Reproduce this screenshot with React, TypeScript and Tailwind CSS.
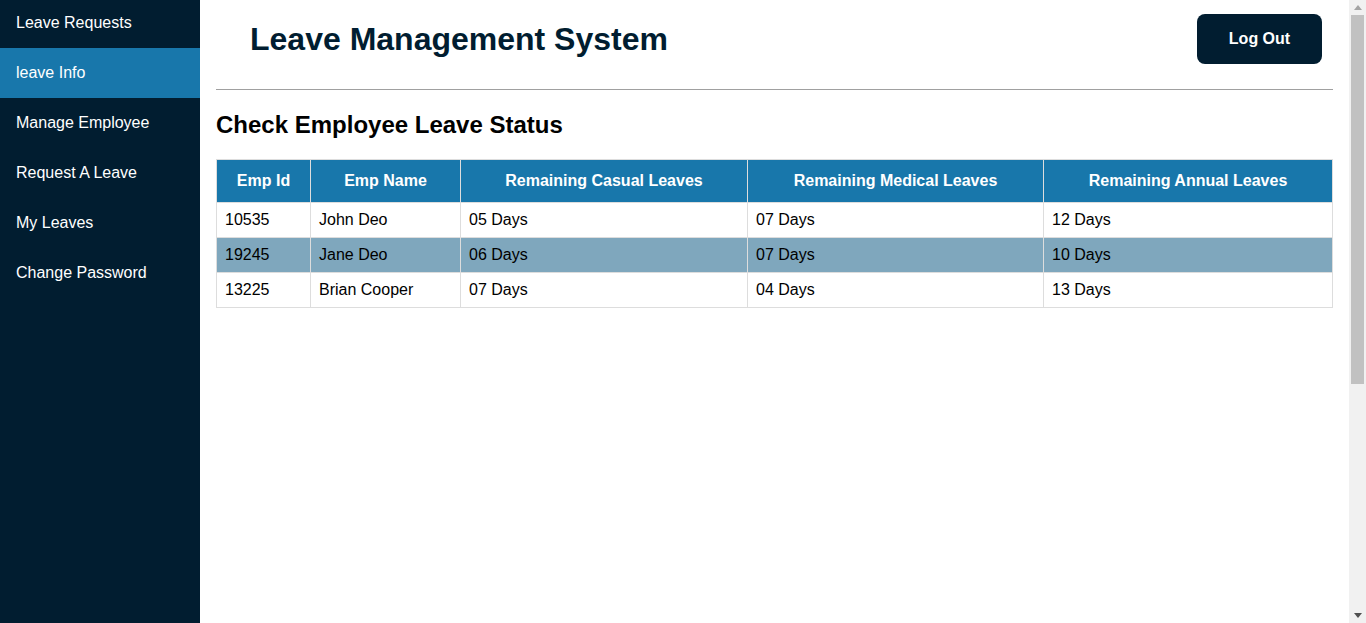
const navItems = [
  "Leave Requests",
  "leave Info",
  "Manage Employee",
  "Request A Leave",
  "My Leaves",
  "Change Password",
];

const rows = [
  { id: "10535", name: "John Deo", casual: "05 Days", medical: "07 Days", annual: "12 Days" },
  { id: "19245", name: "Jane Deo", casual: "06 Days", medical: "07 Days", annual: "10 Days" },
  { id: "13225", name: "Brian Cooper", casual: "07 Days", medical: "04 Days", annual: "13 Days" },
];

export default function App() {
  return (
    <div className="flex h-[623px] overflow-hidden bg-white" style={{ fontFamily: '"Liberation Sans", Arial, sans-serif' }}>
      {/* Sidebar */}
      <aside className="w-[200px] shrink-0 bg-[#011d30]">
        <div className="-mt-[2px] flex flex-col">
          {navItems.map((label) => (
            <a
              key={label}
              href="#"
              className={`flex h-[50px] items-center pl-4 text-base text-white ${
                label === "leave Info" ? "bg-[#1877ab]" : ""
              }`}
            >
              {label}
            </a>
          ))}
        </div>
      </aside>

      {/* Main */}
      <main className="min-w-0 flex-1 px-4">
        <header className="flex items-center justify-between pt-[14px]">
          <h1 className="ml-[34px] text-[32px] font-bold text-[#011d30]">Leave Management System</h1>
          <button className="mr-[11px] h-[50px] w-[125px] rounded-lg bg-[#011d30] text-base font-bold text-white">
            Log Out
          </button>
        </header>
        <hr className="mt-[25px] border-t border-[#a0a0a0]" />

        <h2 className="mt-[21px] text-2xl leading-7 font-bold text-black">Check Employee Leave Status</h2>

        <table className="mt-5 w-full border-collapse text-base text-black">
          <thead>
            <tr className="h-[43px] bg-[#1877ab] text-white">
              <th className="w-[94px] border border-[#ddd] px-2 font-bold">Emp Id</th>
              <th className="w-[150px] border border-[#ddd] px-2 font-bold">Emp Name</th>
              <th className="w-[287px] border border-[#ddd] px-2 font-bold">Remaining Casual Leaves</th>
              <th className="w-[296px] border border-[#ddd] px-2 font-bold">Remaining Medical Leaves</th>
              <th className="border border-[#ddd] px-2 font-bold">Remaining Annual Leaves</th>
            </tr>
          </thead>
          <tbody>
            {rows.map((r, i) => (
              <tr key={r.id} className={`h-[35px] ${i === 1 ? "bg-[#7fa7bd]" : "bg-white"}`}>
                <td className="border border-[#ddd] px-2">{r.id}</td>
                <td className="border border-[#ddd] px-2">{r.name}</td>
                <td className="border border-[#ddd] px-2">{r.casual}</td>
                <td className="border border-[#ddd] px-2">{r.medical}</td>
                <td className="border border-[#ddd] px-2">{r.annual}</td>
              </tr>
            ))}
          </tbody>
        </table>
      </main>

      {/* Scrollbar */}
      <div className="flex w-[17px] shrink-0 flex-col bg-[#f1f1f1]">
        <div className="flex h-[15px] items-center justify-center">
          <svg width="8" height="5" viewBox="0 0 8 5"><path d="M4 0L8 5H0z" fill="#a3a3a3" /></svg>
        </div>
        <div className="mx-[2px] h-[369px] bg-[#c1c1c1]" />
        <div className="flex-1" />
        <div className="flex h-[15px] items-center justify-center">
          <svg width="8" height="5" viewBox="0 0 8 5"><path d="M0 0H8L4 5z" fill="#505050" /></svg>
        </div>
      </div>
    </div>
  );
}
